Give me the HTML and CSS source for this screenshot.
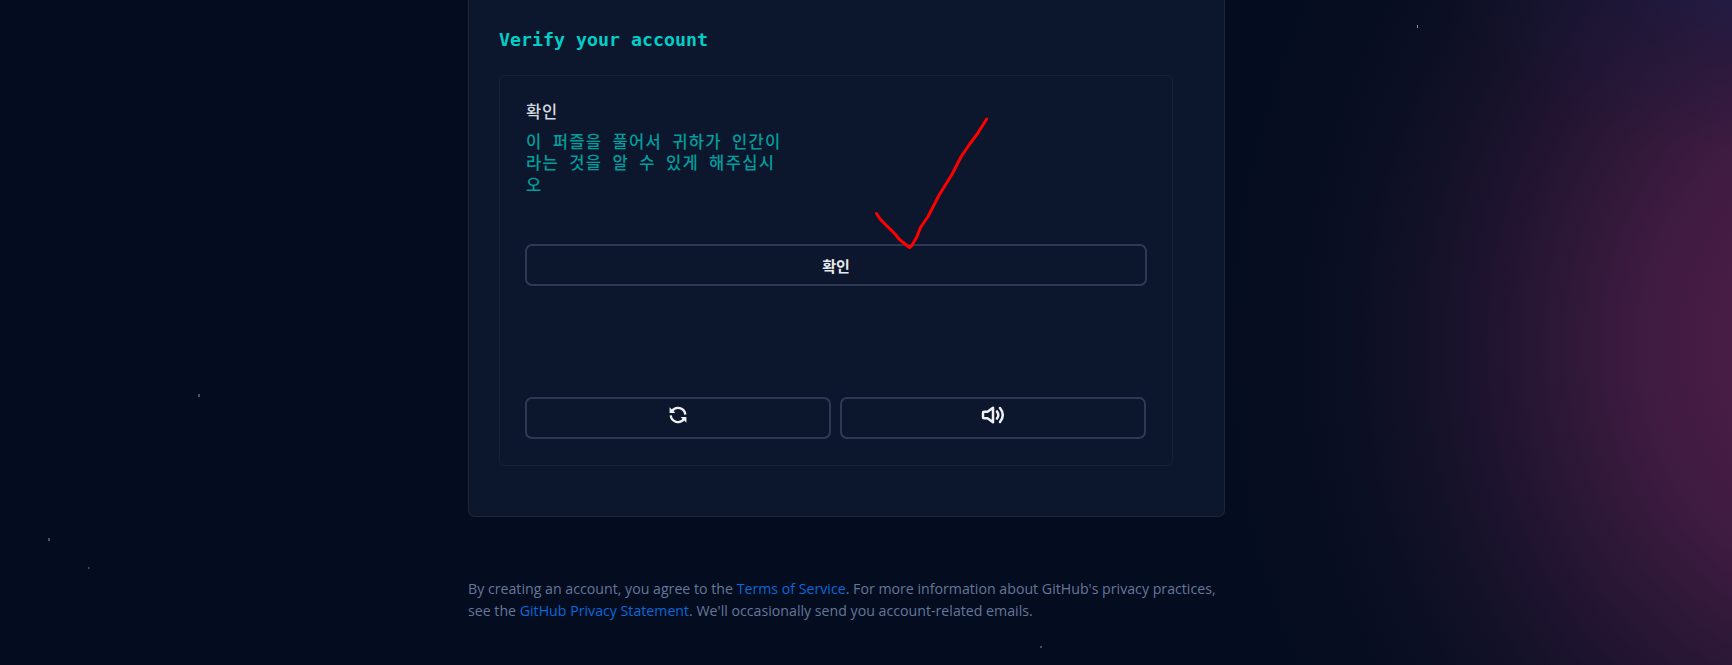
FILE: index.html
```
<!DOCTYPE html>
<html lang="en">
<head>
<meta charset="utf-8">
<title>Verify your account</title>
<link rel="stylesheet" href="styles.css">
</head>
<body>
<main class="page">
  <section class="card">
    <h1 class="title">Verify your account</h1>
    <div class="captcha" lang="ko">
      <h2 class="captcha-title">확인</h2>
      <p class="captcha-text">이 퍼즐을 풀어서 귀하가 인간이<br>라는 것을 알 수 있게 해주십시<br>오</p>
      <button class="btn verify">확인</button>
      <div class="tools">
        <button class="btn" aria-label="새로 고침">
          <svg class="icon" width="18" height="18" viewBox="0 0 18 18"><path d="M3 5.200A7.300 7.300 0 0 1 16.300 8.600M15 12.800A7.300 7.300 0 0 1 1.700 9.400" fill="none" stroke="#eef0f4" stroke-width="2.300"/><path d="M.6 1.200 6.400 7H.6zM17.400 16.800 11.600 11h5.800z" fill="#eef0f4"/></svg>
        </button>
        <button class="btn" aria-label="오디오">
          <svg class="icon" width="24" height="18" viewBox="0 0 24 18"><path d="M3 5.800h3.500l5.500-4v14.400l-5.500-4H3q-1 0-1-1V6.800q0-1 1-1zM16 5.400q2.600 3.600 0 7.200M19 2q5.600 7 0 14" fill="none" stroke="#eef0f4" stroke-width="2.500" stroke-linejoin="round" stroke-linecap="round"/></svg>
        </button>
      </div>
    </div>
  </section>
  <p class="legal"><span class="line">By creating an account, you agree to the <a>Terms of Service</a>. For more information about GitHub's privacy practices,</span> <span class="line">see the <a>GitHub Privacy Statement</a>. We'll occasionally send you account-related emails.</span></p>
</main>
<svg class="overlay" width="1732" height="665" viewBox="0 0 1732 665">
  <g fill="#8b93a1" opacity=".5"><path d="M198 394h2v3h-2zM48 538h2v3h-2zM88 567h1.500v2H88zM1040 646h2v2h-2z"/></g>
  <path d="M1417 25h1v3h-1z" fill="#8b93a1"/>
  <path d="M876.500 213.500l4 6 15 15 4 5 10 8 2-1.500 5-8.500 4-10 7.500-11 11.200-21.500 13-21 9-17.500 7.800-11.500 8.200-11 9.500-15" fill="none" stroke="#f00" stroke-width="3" stroke-linecap="round" stroke-linejoin="round"/>
</svg>
</body>
</html>
```
FILE: styles.css
```
* { box-sizing: border-box; }
body {
  margin: 0;
  height: 665px;
  overflow: hidden;
  background:
    radial-gradient(ellipse 330px 190px at 1760px -40px, rgba(32, 32, 80, .75), rgba(30, 28, 70, .3) 50%, rgba(27, 26, 64, 0)),
    radial-gradient(ellipse 640px 740px at 1850px 345px, #481c45 19%, #3f1b41 32%, #2f1838 44%, #211431 55%, #121127 68%, #090e22 81%, #040c1f 98%);
}
.page { width: 757px; margin-left: 468px; }
.card {
  height: 517px;
  padding: 25px 51px 0 30px;
  border: 1px solid #202838;
  border-top: 0;
  border-radius: 0 0 7px 7px;
  background: #0c162d;
}
.title {
  margin: 0 0 20px;
  font: bold 18.27px/30px "DejaVu Sans Mono", monospace;
  color: #00cfc8;
}
.captcha {
  height: 391px;
  padding: 23px 25px 0;
  border: 1.500px solid #192234;
  border-radius: 6px;
  font-family: "Noto Sans CJK KR", sans-serif;
}
.captcha-title {
  margin: 0 0 7px 1px;
  font-size: 16.500px;
  font-weight: 500;
  line-height: 25px;
  letter-spacing: .8px;
  color: #d4d8df;
}
.captcha-text {
  margin: 0 0 49px 1px;
  font-size: 16.600px;
  font-weight: 500;
  line-height: 21.330px;
  letter-spacing: 1.250px;
  word-spacing: 4.300px;
  color: #009e9c;
}
.btn {
  display: flex;
  justify-content: center;
  align-items: center;
  width: 100%;
  height: 42px;
  padding: 0;
  border: 2px solid #2c3a56;
  border-radius: 7px;
  background: transparent;
  color: #e8eaee;
  font: bold 15px "Noto Sans CJK KR", sans-serif;
}
.verify { padding-top: 1px; margin-bottom: 111px; }
.tools { display: grid; grid-template-columns: 1fr 1fr; gap: 9px; margin-right: 1px; }
.icon { margin-bottom: 5px; }
.legal {
  margin: 61px 0 0;
  font: 14.180px/22px "Open Sans", sans-serif;
  color: #64779a;
}
.line { display: block; white-space: nowrap; }
.legal a { color: #0969da; }
.overlay { position: absolute; top: 0; left: 0; pointer-events: none; }
```
